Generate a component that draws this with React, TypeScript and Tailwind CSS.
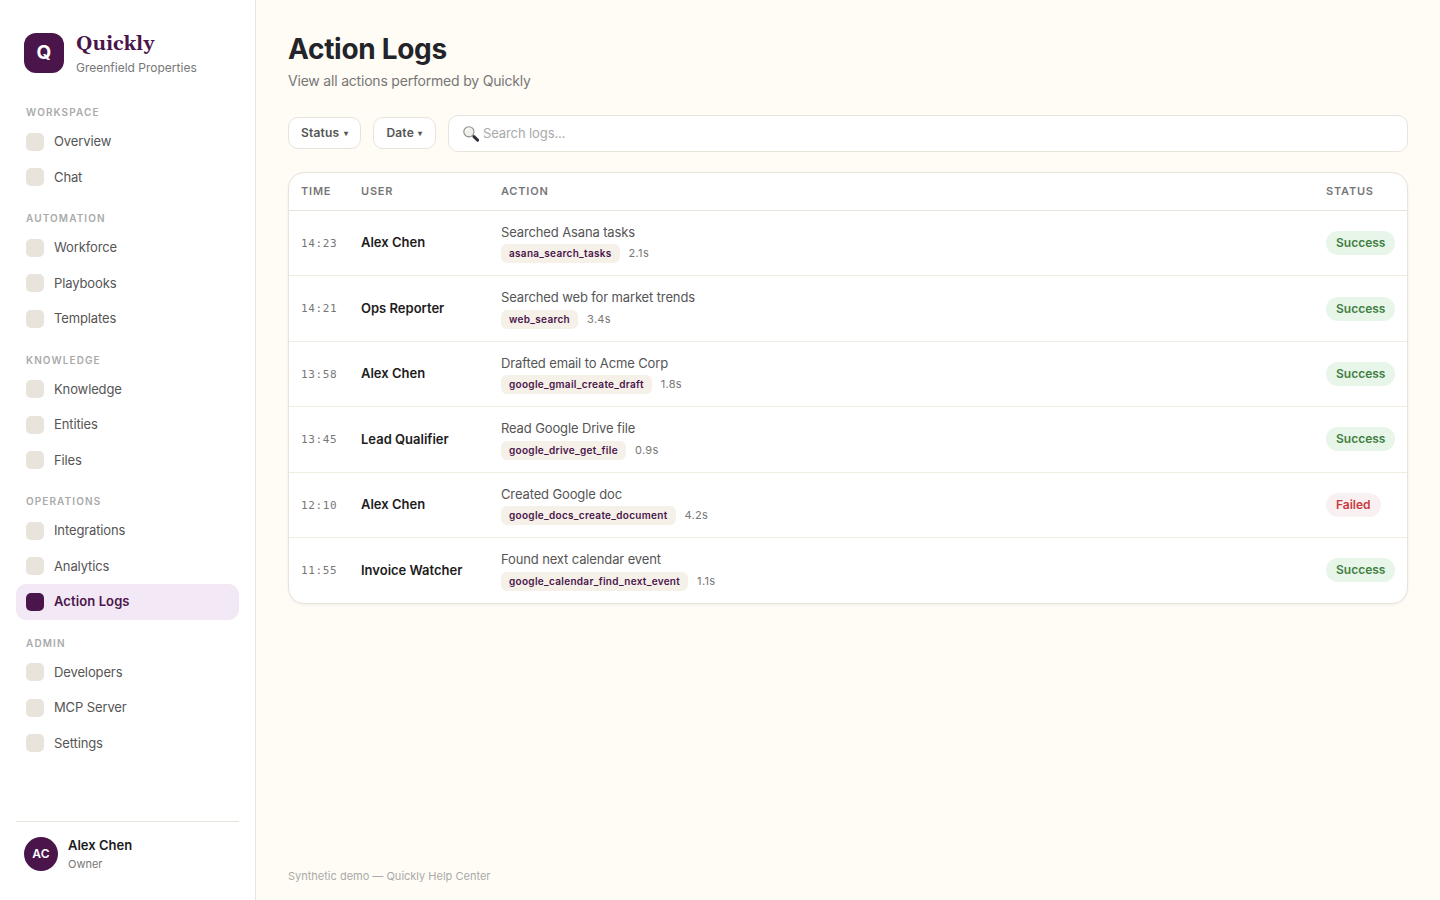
const groups = [
  { label: "WORKSPACE", items: ["Overview", "Chat"] },
  { label: "AUTOMATION", items: ["Workforce", "Playbooks", "Templates"] },
  { label: "KNOWLEDGE", items: ["Knowledge", "Entities", "Files"] },
  { label: "OPERATIONS", items: ["Integrations", "Analytics", "Action Logs"] },
  { label: "ADMIN", items: ["Developers", "MCP Server", "Settings"] },
];

const logs = [
  { time: "14:23", user: "Alex Chen", action: "Searched Asana tasks", tool: "asana_search_tasks", took: "2.1s", ok: true },
  { time: "14:21", user: "Ops Reporter", action: "Searched web for market trends", tool: "web_search", took: "3.4s", ok: true },
  { time: "13:58", user: "Alex Chen", action: "Drafted email to Acme Corp", tool: "google_gmail_create_draft", took: "1.8s", ok: true },
  { time: "13:45", user: "Lead Qualifier", action: "Read Google Drive file", tool: "google_drive_get_file", took: "0.9s", ok: true },
  { time: "12:10", user: "Alex Chen", action: "Created Google doc", tool: "google_docs_create_document", took: "4.2s", ok: false },
  { time: "11:55", user: "Invoice Watcher", action: "Found next calendar event", tool: "google_calendar_find_next_event", took: "1.1s", ok: true },
];

function NavItem({ name }: { name: string }) {
  const active = name === "Action Logs";
  return (
    <a
      className={`flex items-center gap-2.5 rounded-[10px] px-2.5 py-2 text-[13px] leading-[19.5px] ${
        active ? "bg-[#f3e8f5] font-semibold tracking-[0.1px] text-[#4a154b]" : "tracking-[-0.12px] text-[#555555]"
      }`}
    >
      <span className={`-mt-px size-[18px] rounded-[5px] ${active ? "bg-[#4a154b]" : "bg-[#e8e4dc]"}`} />
      {name}
    </a>
  );
}

function Sidebar() {
  return (
    <aside className="flex w-64 shrink-0 flex-col border-r border-[#e8e4dc] bg-white px-4 pt-[29px] pb-5">
      <div className="flex items-center gap-3 px-2">
        <div className="flex size-10 items-center justify-center rounded-xl bg-[#4a154b] text-[19px] font-bold text-white">Q</div>
        <div>
          <div className="font-[Gelasio,Georgia,'Liberation_Serif',serif] text-[20px] leading-[30px] font-bold text-[#4a154b]">Quickly</div>
          <div className="text-xs leading-[18px] text-[#777777]">Greenfield Properties</div>
        </div>
      </div>
      <nav className="mt-[12.25px]">
        {groups.map((g) => (
          <div key={g.label}>
            <div className="px-2.5 pt-4 pb-1 text-[10px] leading-[15px] font-semibold tracking-[1.1px] text-[#aaaaaa]">{g.label}</div>
            {g.items.map((i) => (
              <NavItem key={i} name={i} />
            ))}
          </div>
        ))}
      </nav>
      <div className="mt-auto flex items-center gap-2.5 border-t border-[#e8e4dc] px-2 pt-3.5 pb-2">
        <div className="flex size-[34px] items-center justify-center rounded-full bg-[#4a154b] text-xs font-semibold tracking-[0.2px] text-white">AC</div>
        <div>
          <div className="text-[13px] leading-[19.5px] font-semibold text-[#1d1c1d]">Alex Chen</div>
          <div className="text-[11px] leading-[16.5px] text-[#777777]">Owner</div>
        </div>
      </div>
    </aside>
  );
}

function FilterButton({ label }: { label: string }) {
  return (
    <button className="-mt-px flex h-8 items-center gap-1 rounded-[10px] border border-[#e8e4dc] bg-white px-3 text-xs font-semibold tracking-[0.2px] text-[#555555]">
      {label}
      <span className="w-[5px] text-[8px] tracking-normal">▾</span>
    </button>
  );
}

function Magnifier() {
  return (
    <svg viewBox="0 0 16 16" className="size-4">
      <path d="M9.4 9.2l1.5 1.4" stroke="#9a9a9a" strokeWidth="1.6" />
      <path d="M11 10.7l3.6 3.5" stroke="#30323a" strokeWidth="3" strokeLinecap="round" />
      <circle cx="5.9" cy="5.8" r="5.1" fill="#efefec" stroke="#8d8d8d" strokeWidth="1.1" />
      <path d="M3 5.2a3.1 3.1 0 0 1 2.8-2.5" fill="none" stroke="#ffffff" strokeWidth="1.1" strokeLinecap="round" />
    </svg>
  );
}

const columns = "grid grid-cols-[60px_140px_1fr_69px] items-center px-3";

function LogTable() {
  return (
    <section className="mt-5 overflow-hidden rounded-2xl border border-[#e8e4dc] bg-white shadow-[0_1px_3px_rgba(0,0,0,0.06)]">
      <div className={`${columns} border-b border-[#e8e4dc] py-2.5 text-[11px] leading-[17px] font-semibold tracking-[0.8px] text-[#777777]`}>
        <span>TIME</span>
        <span>USER</span>
        <span>ACTION</span>
        <span>STATUS</span>
      </div>
      {logs.map((l) => (
        <div key={l.time} className={`${columns} h-[65.4px] border-b border-[#f0ece4] last:h-[65px] last:border-b-0`}>
          <span className="pt-0.5 font-['DejaVu_Sans_Mono',monospace] text-[11px] tracking-[0.6px] text-[#777777]">{l.time}</span>
          <span className="text-[13px] font-semibold text-[#1d1c1d]">{l.user}</span>
          <div className="text-[13px] leading-[19.5px] text-[#555555]">
            <div className="tracking-[-0.13px]">{l.action}</div>
            <div className="mt-0.5 flex items-center gap-[9px]">
              <span className="rounded-md bg-[#f5f0e8] px-2 py-0.5 text-[10px] leading-[15px] font-semibold tracking-[0.3px] text-[#4a154b]">{l.tool}</span>
              <span className="text-[11px] leading-[17px] tracking-[0.3px] text-[#777777]">{l.took}</span>
            </div>
          </div>
          <span
            className={`justify-self-start rounded-full px-2.5 py-[3px] text-xs leading-[18px] font-semibold ${
              l.ok ? "bg-[#e8f5e9] text-[#3f7f43]" : "bg-[#f9f0f1] text-[#c93a3e]"
            }`}
          >
            {l.ok ? "Success" : "Failed"}
          </span>
        </div>
      ))}
    </section>
  );
}

export default function App() {
  return (
    <div className="flex h-screen overflow-hidden bg-[#fffcf5] font-[Inter,sans-serif] text-[#1d1c1d]">
      <Sidebar />
      <main className="flex min-w-0 flex-1 flex-col px-8 pt-7 pb-4">
        <h1 className="text-[28px] leading-[42px] font-bold tracking-[-0.3px] text-[#222429] [font-variation-settings:'opsz'_14]">Action Logs</h1>
        <p className="text-sm leading-[21px] tracking-[-0.2px] text-[#777777]">View all actions performed by Quickly</p>
        <div className="mt-6 flex items-center gap-3">
          <FilterButton label="Status" />
          <FilterButton label="Date" />
          <div className="flex h-[37px] flex-1 items-center gap-1 rounded-[10px] border border-[#e8e4dc] bg-white px-3.5 text-[13px] tracking-[-0.1px] text-[#aaaaaa]">
            <Magnifier />
            Search logs...
          </div>
        </div>
        <LogTable />
        <footer className="mt-auto text-[11px] leading-4 text-[#aaaaaa]">Synthetic demo — Quickly Help Center</footer>
      </main>
    </div>
  );
}
